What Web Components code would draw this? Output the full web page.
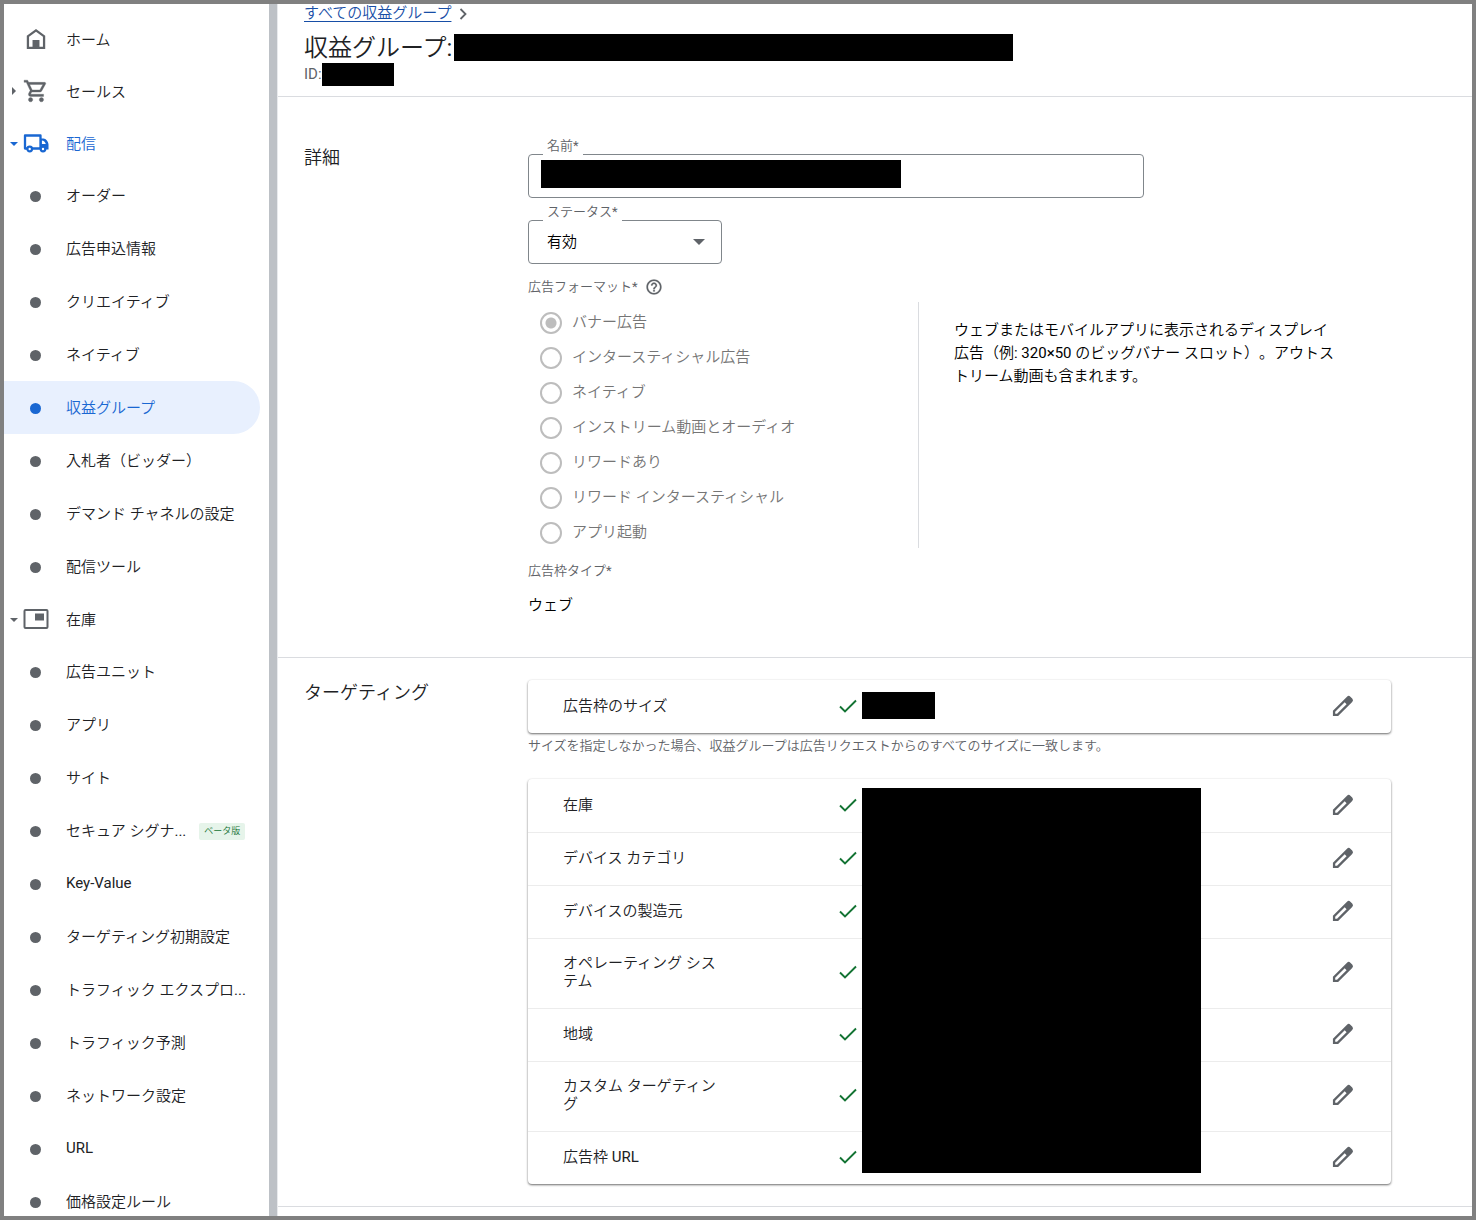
<!DOCTYPE html>
<html lang="ja">
<head>
<meta charset="utf-8">
<title>収益グループ</title>
<style>
html, body { margin: 0; height: 100%; }
body {
  font-family: Roboto, "Noto Sans CJK JP DemiLight", "Noto Sans CJK JP Light", "Noto Sans CJK JP", sans-serif;
  font-size: 15px;
  font-weight: 400;
  text-spacing-trim: space-all;
  color: #202124;
  background: #fff;
}
</style>
</head>
<body>
<app-shell>
  <side-nav slot="nav"></side-nav>
  <page-header></page-header>
  <form-section heading="詳細" class="details"><detail-form></detail-form></form-section>
  <form-section heading="ターゲティング" class="targeting"><targeting-list></targeting-list></form-section>
</app-shell>

<script>
const define = (name, html, setup) => {
  const template = document.createElement('template');
  template.innerHTML = html;
  customElements.define(name, class extends HTMLElement {
    constructor() {
      super();
      this.attachShadow({ mode: 'open' }).append(template.content.cloneNode(true));
    }
    connectedCallback() { if (setup) setup(this, this.shadowRoot); }
  });
};

define('app-shell', `
<style>
  :host { display: flex; box-sizing: border-box; height: 100vh; border: 4px solid #808080; overflow: hidden; }
  .nav { flex: 0 0 265px; overflow: hidden; }
  .rail { flex: 0 0 8px; background: #bdc1c6; border-right: 1px solid #e8eaed; }
  main { flex: 1; min-width: 0; overflow: hidden; }
</style>
<div class="nav"><slot name="nav"></slot></div>
<div class="rail"></div>
<main><slot></slot></main>`);

const icons = {
  home: '<svg width="26" height="26" viewBox="0 0 24 24"><path fill="currentColor" fill-rule="evenodd" d="M12 2.8 3.5 9v12.2h17V9L12 2.8zM18.4 19.1h-3.2v-6.2H8.8v6.2H5.600V10L12 5.300l6.400 4.700z"/></svg>',
  cart: '<svg width="26" height="26" viewBox="0 0 24 24"><path fill="currentColor" stroke="currentColor" stroke-width=".3" d="M15.550 13c.75 0 1.410-.41 1.750-1.030l3.580-6.490A.996.996 0 0 0 20.010 4H5.210l-.94-2H1v2h2l3.600 7.590-1.350 2.440C4.520 15.370 5.480 17 7 17h12v-2H7l1.100-2h7.450zM6.160 6h12.150l-2.760 5H8.530L6.160 6zM7 18c-1.100 0-1.990.9-1.990 2S5.900 22 7 22s2-.9 2-2-.9-2-2-2zm10 0c-1.100 0-1.990.9-1.990 2s.89 2 1.990 2 2-.9 2-2-.9-2-2-2z"/></svg>',
  truck: '<svg width="26" height="20" viewBox="0 0 26 20"><path fill="none" stroke="currentColor" stroke-width="2.300" stroke-linejoin="round" d="M2 2.500h15.500v13H2z"/><path fill="currentColor" fill-rule="evenodd" d="M17.500 5.500h3c2.500 0 5 3.500 5 6v5h-8zM18.800 7.500v3.500h4c-.6-2-2-3.300-4-3.500z"/><circle cx="6.700" cy="16" r="2.300" fill="#fff" stroke="currentColor" stroke-width="2.200"/><circle cx="20" cy="16" r="2.300" fill="#fff" stroke="currentColor" stroke-width="2.200"/></svg>',
  inventory: '<svg width="26" height="20" viewBox="0 0 26 20"><rect x="1.500" y="1" width="23" height="18" rx="1" fill="none" stroke="currentColor" stroke-width="2"/><path fill="currentColor" d="M12 4.500h9v7h-9z"/></svg>',
  dot: '<svg width="12" height="12" viewBox="0 0 12 12"><circle cx="5.500" cy="6.500" r="5.500" fill="currentColor"/></svg>'
};
const carets = {
  open: '<svg width="8" height="8" viewBox="0 0 8 8"><path fill="currentColor" d="M0 3h8L4 7z"/></svg>',
  closed: '<svg width="8" height="8" viewBox="0 0 8 8"><path fill="currentColor" d="M2 0v8l4-4z"/></svg>'
};

define('nav-item', `
<style>
  :host { display: block; color: #5f6368; }
  a { display: flex; align-items: center; height: 53px; margin-right: 9px; border-radius: 0 27px 27px 0; color: inherit; text-decoration: none; }
  :host([head]) a { height: 52px; }
  .caret { flex: 0 0 14px; display: flex; justify-content: flex-end; }
  .icon { flex: 0 0 36px; display: flex; justify-content: center; }
  .text { flex: 1; padding: 0 0 2px 12px; white-space: nowrap; color: #202124; }
  svg { display: block; }
  :host([active]), :host([active]) .text { color: #1967d2; }
  :host([current]) a { background: #e8f0fe; }
</style>
<a href="#"><span class="caret"></span><span class="icon"></span><span class="text"><slot></slot></span></a>`,
(host, root) => {
  root.querySelector('.icon').innerHTML = icons[host.getAttribute('icon') || 'dot'];
  root.querySelector('.caret').innerHTML = carets[host.getAttribute('caret')] || '';
});

define('side-nav', `
<style>
  :host { display: block; }
  nav { padding-top: 9px; }
  .badge { display: inline-block; vertical-align: middle; margin-left: 13px; padding: 0 5px; border-radius: 2px; background: #e6f4ea; color: #137333; font-size: 9px; line-height: 17px; }
</style>
<nav>
  <nav-item head icon="home">ホーム</nav-item>
  <nav-item head icon="cart" caret="closed">セールス</nav-item>
  <nav-item head active icon="truck" caret="open">配信</nav-item>
  <nav-item>オーダー</nav-item>
  <nav-item>広告申込情報</nav-item>
  <nav-item>クリエイティブ</nav-item>
  <nav-item>ネイティブ</nav-item>
  <nav-item active current>収益グループ</nav-item>
  <nav-item>入札者（ビッダー）</nav-item>
  <nav-item>デマンド チャネルの設定</nav-item>
  <nav-item>配信ツール</nav-item>
  <nav-item head icon="inventory" caret="open">在庫</nav-item>
  <nav-item>広告ユニット</nav-item>
  <nav-item>アプリ</nav-item>
  <nav-item>サイト</nav-item>
  <nav-item>セキュア シグナ...<span class="badge">ベータ版</span></nav-item>
  <nav-item>Key-Value</nav-item>
  <nav-item>ターゲティング初期設定</nav-item>
  <nav-item>トラフィック エクスプロ...</nav-item>
  <nav-item>トラフィック予測</nav-item>
  <nav-item>ネットワーク設定</nav-item>
  <nav-item>URL</nav-item>
  <nav-item>価格設定ルール</nav-item>
</nav>`);

define('page-header', `
<style>
  :host { display: block; padding: 0 26px 10px; border-bottom: 1px solid #dadce0; }
  .crumbs { display: flex; align-items: center; gap: 8px; height: 19px; line-height: 19px; }
  a { color: #174ea6; text-decoration: underline; text-underline-offset: 3px; }
  h1 { display: flex; gap: 2px; height: 27px; margin: 11px 0 2px; font-size: 24px; font-weight: inherit; line-height: 29px; }
  .id { display: flex; line-height: 23px; color: #5f6368; }
  .mask { background: #000; }
  h1 .mask { width: 559px; }
  .id .mask { width: 72px; }
</style>
<div class="crumbs"><a href="#">すべての収益グループ</a><svg width="8" height="12" viewBox="0 0 8 12"><path d="M1.500 1l5 5-5 5" fill="none" stroke="#5f6368" stroke-width="1.800"/></svg></div>
<h1>収益グループ:<span class="mask"></span></h1>
<div class="id">ID:<span class="mask"></span></div>`);

define('form-section', `
<style>
  :host { display: flex; padding: 22px 81px 22px 26px; border-bottom: 1px solid #dadce0; }
  :host(.details) { padding: 48px 81px 41px 26px; }
  h2 { flex: 0 0 224px; margin: 0; font-size: 18px; font-weight: inherit; line-height: 25px; }
  .body { flex: 1; min-width: 0; }
</style>
<h2></h2><div class="body"><slot></slot></div>`,
(host, root) => { root.querySelector('h2').textContent = host.getAttribute('heading'); });

define('detail-form', `
<style>
  :host { display: block; padding-top: 9px; }
  .field { position: relative; box-sizing: border-box; height: 44px; border: 1px solid #80868b; border-radius: 4px; }
  .name { max-width: 616px; margin-bottom: 22px; }
  .status { width: 194px; margin-bottom: 13px; }
  .field label { position: absolute; left: 14px; top: -18px; padding: 0 4px; background: #fff; line-height: 18px; }
  .small { font-size: 13px; color: #5f6368; }
  input.text, select { box-sizing: border-box; width: 100%; height: 100%; margin: 0; padding: 0 18px; border: 0; background: none; font: inherit; color: #000; appearance: none; outline: none; }
  .mask { position: absolute; left: 12px; top: 5px; width: 360px; height: 28px; background: #000; }
  .arrow { position: absolute; right: 16px; top: 18px; }
  .caption { display: flex; align-items: center; gap: 7px; line-height: 20px; }
  .format { display: flex; margin: 5px 0 13px; }
  fieldset { box-sizing: border-box; flex: 0 0 391px; display: flex; flex-direction: column; gap: 13px; margin: 0; padding: 10px 0 4px 12px; border: 0; border-right: 1px solid #dadce0; }
  fieldset label { display: flex; align-items: center; gap: 10px; height: 22px; line-height: 22px; color: #757575; }
  fieldset span { padding-bottom: 3px; }
  input[type=radio] { appearance: none; flex: none; box-sizing: border-box; width: 22px; height: 22px; margin: 0; border: 2px solid #bdbdbd; border-radius: 50%; }
  input[type=radio]:checked { background: radial-gradient(circle, #bdbdbd 5px, transparent 6px); }
  p { margin: 0; }
  .note { max-width: 388px; padding: 17px 0 0 35px; line-height: 23px; color: #000; }
  .value { margin-top: 13px; line-height: 22px; color: #000; }
</style>
<div class="field name"><label class="small" for="name">名前*</label><input class="text" id="name" type="text"><span class="mask"></span></div>
<div class="field status"><label class="small" for="status">ステータス*</label>
  <select id="status"><option>有効</option></select>
  <svg class="arrow" width="12" height="6" viewBox="0 0 12 6"><path d="M0 0h12L6 6z" fill="#5f6368"/></svg>
</div>
<div class="caption small"><span id="fmt">広告フォーマット*</span><svg width="18" height="18" viewBox="0 0 24 24"><path fill="#5f6368" stroke="#5f6368" stroke-width=".3" d="M11 18h2v-2h-2v2zm1-16C6.480 2 2 6.480 2 12s4.480 10 10 10 10-4.480 10-10S17.520 2 12 2zm0 18c-4.410 0-8-3.590-8-8s3.590-8 8-8 8 3.590 8 8-3.590 8-8 8zm0-14c-2.210 0-4 1.790-4 4h2c0-1.100.9-2 2-2s2 .9 2 2c0 2-3 1.750-3 5h2c0-2.250 3-2.500 3-5 0-2.210-1.790-4-4-4z"/></svg></div>
<div class="format">
  <fieldset aria-labelledby="fmt">
    <label><input type="radio" name="format" disabled checked><span>バナー広告</span></label>
    <label><input type="radio" name="format" disabled><span>インタースティシャル広告</span></label>
    <label><input type="radio" name="format" disabled><span>ネイティブ</span></label>
    <label><input type="radio" name="format" disabled><span>インストリーム動画とオーディオ</span></label>
    <label><input type="radio" name="format" disabled><span>リワードあり</span></label>
    <label><input type="radio" name="format" disabled><span>リワード インタースティシャル</span></label>
    <label><input type="radio" name="format" disabled><span>アプリ起動</span></label>
  </fieldset>
  <p class="note">ウェブまたはモバイルアプリに表示されるディスプレイ広告（例: 320×50 のビッグバナー スロット）。アウトストリーム動画も含まれます。</p>
</div>
<div class="caption small">広告枠タイプ*</div>
<p class="value">ウェブ</p>`);

define('target-row', `
<style>
  :host { display: flex; align-items: center; box-sizing: border-box; min-height: 53px; padding: 15px 35px 18px; border-top: 1px solid #ececec; line-height: 18px; }
  :host(:first-of-type) { border-top-color: transparent; }
  .label { flex: 0 0 276px; }
  .label span { display: block; max-width: 165px; }
  .check { flex: none; margin-right: 5px; }
  .fill { flex: 1; height: 0; display: flex; align-items: center; }
  button { flex: none; display: flex; height: 18px; align-items: center; padding: 0; border: 0; background: none; color: #5f6368; }
</style>
<span class="label"><span><slot></slot></span></span>
<svg class="check" width="18" height="14" viewBox="0 0 18 14"><path d="M1 7.500l5 5L17 1.500" fill="none" stroke="#137333" stroke-width="1.900"/></svg>
<span class="fill"><slot name="value"></slot></span>
<button type="button" aria-label="編集"><svg width="26" height="26" viewBox="0 0 24 24"><path fill="currentColor" fill-rule="evenodd" d="M2.700 21.200v-4.800L15.700 3.400a2.200 2.200 0 0 1 3.100 0l1.700 1.700a2.200 2.200 0 0 1 0 3.100L7.500 21.200zM4.800 19.100h1.700l8.800-8.800-1.700-1.700L4.800 17.400z"/></svg></button>`);

define('targeting-list', `
<style>
  :host { display: block; }
  .card { position: relative; background: #fff; border-radius: 4px; box-shadow: 0 1px 2px rgba(0,0,0,.45), 0 1px 3px rgba(0,0,0,.18); }
  .size { display: block; width: 73px; height: 27px; background: #000; }
  p { margin: 3px 0 23px; font-size: 13px; line-height: 20px; color: #5f6368; }
  .mask { position: absolute; left: 334px; top: 9px; bottom: 11px; width: 339px; background: #000; }
</style>
<div class="card"><target-row>広告枠のサイズ<span class="size" slot="value"></span></target-row></div>
<p>サイズを指定しなかった場合、収益グループは広告リクエストからのすべてのサイズに一致します。</p>
<div class="card">
  <target-row>在庫</target-row>
  <target-row>デバイス カテゴリ</target-row>
  <target-row>デバイスの製造元</target-row>
  <target-row>オペレーティング システム</target-row>
  <target-row>地域</target-row>
  <target-row>カスタム ターゲティング</target-row>
  <target-row>広告枠 URL</target-row>
  <span class="mask"></span>
</div>`);
</script>
</body>
</html>
